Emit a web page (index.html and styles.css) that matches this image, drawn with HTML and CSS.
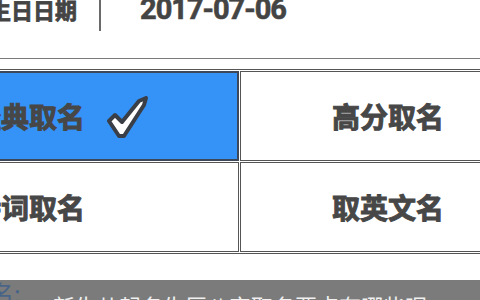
FILE: index.html
```html
<!DOCTYPE html>
<html lang="zh-CN">
<head>
<meta charset="utf-8">
<title>起名</title>
<link rel="stylesheet" href="styles.css">
</head>
<body>
<div class="page">
  <div class="info-row">
    <span class="info-label">生日日期</span>
    <span class="info-sep"></span>
    <span class="info-date">2017-07-06</span>
  </div>
  <div class="rule"></div>
  <div class="grid">
    <div class="cell cell-active">
      <span class="cell-text">经典取名</span>
      <svg class="check" width="42" height="44" viewBox="0 0 42 44">
        <path d="M2 25 L8 19 L15 26 L32 5 L39 2 L37 9 L17 40 L12 40 Z" fill="#ffffff" stroke="#3a3f47" stroke-width="4" stroke-linejoin="round"/>
      </svg>
    </div>
    <div class="cell"><span class="cell-text">高分取名</span></div>
    <div class="cell"><span class="cell-text">诗词取名</span></div>
    <div class="cell"><span class="cell-text">取英文名</span></div>
  </div>
  <div class="ticker">
    <span class="ticker-label">名:</span>
    <span class="ticker-text">新生儿起名生辰八字取名要点有哪些呢</span>
  </div>
</div>
</body>
</html>
```

FILE: styles.css
```css
html, body {
  margin: 0;
  padding: 0;
  background: #ffffff;
  overflow: hidden;
}

body {
  width: 480px;
  height: 300px;
  font-family: "Noto Sans CJK SC", "Noto Sans", sans-serif;
  color: #474747;
}

.page {
  margin-left: -121px;
  width: 760px;
}

.info-row {
  display: flex;
  align-items: center;
  height: 60px;
  margin-top: -21px;
  padding-left: 110px;
}

.info-label {
  font-size: 22px;
  font-weight: 700;
  -webkit-text-stroke: 0.8px #444444;
  line-height: 1;
  width: 88px;
  white-space: nowrap;
  color: #444444;
}

.info-sep {
  width: 2px;
  height: 50px;
  margin-top: -6px;
  margin-left: 22px;
  background: #6a6a6a;
}

.info-date {
  margin-left: 39px;
  font-family: Roboto, "Liberation Sans", sans-serif;
  font-size: 29px;
  font-weight: 700;
  letter-spacing: -1px;
  -webkit-text-stroke: 0.6px #444444;
  line-height: 1;
  color: #444444;
}

.rule {
  height: 1px;
  margin-top: 19px;
  background: #7a7a7a;
}

.grid {
  display: grid;
  grid-template-columns: 358px 296px;
  grid-auto-rows: 90px;
  gap: 1px;
  padding: 1px;
  margin-top: 10px;
  border: 1px solid #555555;
  width: max-content;
}

.cell {
  box-sizing: border-box;
  border: 1px solid #555555;
  display: flex;
  align-items: center;
  padding-left: 91px;
  background: #ffffff;
}

.cell-active {
  border: 2px solid #3d4858;
  padding-left: 90px;
  background: #3592f6;
}

.cell-text {
  font-size: 28px;
  font-weight: 700;
  -webkit-text-stroke: 1px #474747;
  line-height: 1;
  color: #474747;
  white-space: nowrap;
}

.check {
  margin-left: 22px;
  margin-top: 4px;
}

.ticker {
  display: flex;
  align-items: flex-start;
  margin-top: 26px;
  height: 40px;
  background: #7b7b7b;
  padding-left: 111px;
}

.ticker-label {
  font-size: 24px;
  line-height: 1;
  margin-top: 1px;
  color: #4a6488;
  width: 42px;
  white-space: nowrap;
}

.ticker-text {
  font-size: 22px;
  line-height: 1;
  margin-top: 14px;
  margin-left: 21px;
  color: #f0f0f0;
  white-space: nowrap;
}
```
